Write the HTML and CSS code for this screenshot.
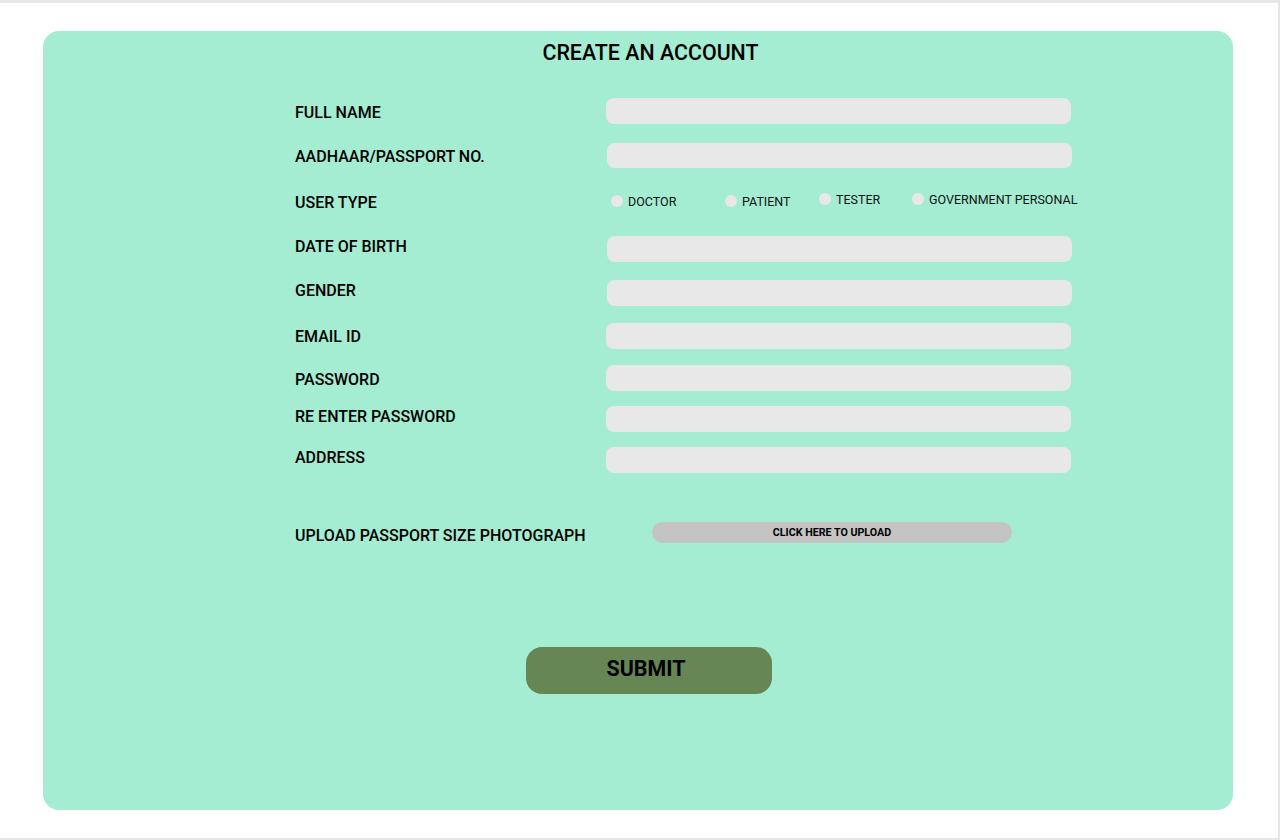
FILE: index.html
```html
<!DOCTYPE html>
<html lang="en">
<head>
<meta charset="utf-8">
<title>Create an Account</title>
<link rel="stylesheet" href="styles.css">
</head>
<body>
<div class="frame">
  <main class="card">
    <h1 class="title">CREATE AN ACCOUNT</h1>
    <form class="form">
      <div class="row r1">
        <label class="label">FULL NAME</label>
        <input class="field" type="text">
      </div>
      <div class="row r2">
        <label class="label">AADHAAR/PASSPORT NO.</label>
        <input class="field shift" type="text">
      </div>
      <div class="row r3">
        <label class="label">USER TYPE</label>
        <div class="radios">
          <label class="radio"><span class="dot"></span>DOCTOR</label>
          <label class="radio"><span class="dot"></span>PATIENT</label>
          <label class="radio up"><span class="dot"></span>TESTER</label>
          <label class="radio up"><span class="dot"></span>GOVERNMENT PERSONAL</label>
        </div>
      </div>
      <div class="row r4">
        <label class="label hi">DATE OF BIRTH</label>
        <input class="field shift" type="text">
      </div>
      <div class="row r5">
        <label class="label hi">GENDER</label>
        <input class="field shift" type="text">
      </div>
      <div class="row r6">
        <label class="label">EMAIL ID</label>
        <input class="field" type="text">
      </div>
      <div class="row r7">
        <label class="label">PASSWORD</label>
        <input class="field" type="password">
      </div>
      <div class="row r8">
        <label class="label hi">RE ENTER PASSWORD</label>
        <input class="field" type="password">
      </div>
      <div class="row r9">
        <label class="label hi">ADDRESS</label>
        <input class="field" type="text">
      </div>
      <div class="row r10">
        <label class="label">UPLOAD PASSPORT SIZE PHOTOGRAPH</label>
        <button class="upload" type="button">CLICK HERE TO UPLOAD</button>
      </div>
      <button class="submit" type="button">SUBMIT</button>
    </form>
  </main>
</div>
</body>
</html>
```
FILE: styles.css
```css
* { box-sizing: border-box; }
html, body { margin: 0; padding: 0; background: #ffffff; }
body { font-family: Roboto, "Liberation Sans", sans-serif; color: #000; }

.frame {
  width: 1280px;
  height: 840px;
  border-top: 3px solid #e6e6e6;
  border-right: 2px solid #e6e6e6;
  border-bottom: 2px solid #e6e6e6;
  padding-top: 28px;
  padding-left: 43px;
}

.card {
  width: 1190px;
  height: 779px;
  background: #a4edd3;
  border-radius: 16px;
  padding-top: 9px;
}

.title {
  margin: 0 0 34px 0;
  padding-left: 25px;
  text-align: center;
  font-size: 21.4px;
  line-height: 26px;
  font-weight: 500;
}

.form {
  margin-left: 252px;
  display: flex;
  flex-direction: column;
  align-items: flex-start;
}

.row {
  display: flex;
  align-items: center;
  height: 26px;
}
.r1 { margin-top: -2px; }
.r2 { margin-top: 19px; height: 25px; }
.r3 { margin-top: 20px; }
.r4 { margin-top: 22px; }
.r5 { margin-top: 18px; }
.r6 { margin-top: 17px; }
.r7 { margin-top: 16px; }
.r8 { margin-top: 15px; }
.r9 { margin-top: 15px; }
.r10 { margin-top: 48px; }

.label {
  width: 311px;
  font-size: 16px;
  line-height: 19px;
  font-weight: 500;
  margin-top: 2px;
  white-space: nowrap;
}
.label.hi { margin-top: 0; margin-bottom: 6px; }
.r6 .label { margin-top: 0; }

.field {
  width: 465px;
  height: 100%;
  border: none;
  border-radius: 8px;
  background: #e8e8e8;
  outline: none;
  padding: 0 10px;
}
.field.shift { margin-left: 1px; }

.radios {
  display: grid;
  grid-template-columns: 114px 94px 93px auto;
  align-items: center;
  margin-left: 5px;
  height: 100%;
}
.radio {
  display: flex;
  align-items: center;
  gap: 5px;
  font-size: 12.5px;
  line-height: 15px;
  font-weight: 400;
  color: #111;
}
.radio.up { margin-bottom: 4px; }
.dot {
  width: 12px;
  height: 12px;
  border-radius: 50%;
  background: #e8e8e8;
  flex: none;
}

.upload {
  width: 360px;
  height: 21px;
  margin-left: 46px;
  margin-bottom: 3px;
  border: none;
  border-radius: 11px;
  background: #c4c4c4;
  font-family: Roboto, "Liberation Sans", sans-serif;
  font-size: 10.7px;
  font-weight: 700;
  color: #000;
  padding: 0;
}

.submit {
  margin-top: 100px;
  margin-left: 231px;
  width: 246px;
  height: 47px;
  border: none;
  border-radius: 16px;
  background: #668656;
  font-family: Roboto, "Liberation Sans", sans-serif;
  font-size: 21.4px;
  font-weight: 700;
  color: #000;
  padding: 0 6px 4px 0;
}
```
